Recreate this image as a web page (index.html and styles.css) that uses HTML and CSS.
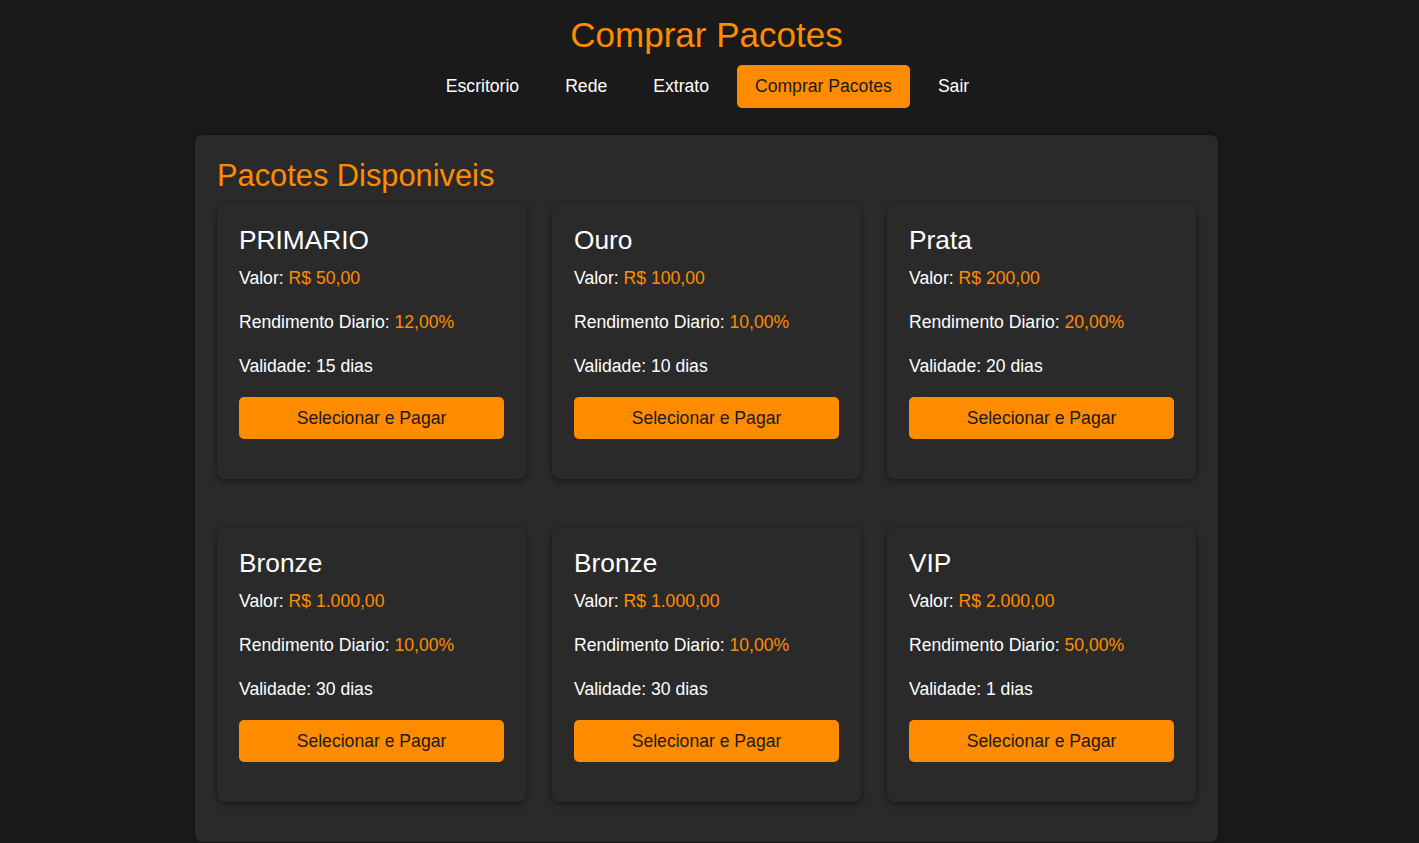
FILE: index.html
```html
<!DOCTYPE html>
<html lang="pt">
<head>
<meta charset="utf-8">
<title>Comprar Pacotes</title>
<link rel="stylesheet" href="styles.css">
</head>
<body>
<header class="header">
  <h1 class="page-title">Comprar Pacotes</h1>
  <nav class="nav">
    <a class="nav-link" href="#">Escritorio</a>
    <a class="nav-link" href="#">Rede</a>
    <a class="nav-link" href="#">Extrato</a>
    <a class="nav-link active" href="#">Comprar Pacotes</a>
    <a class="nav-link" href="#">Sair</a>
  </nav>
</header>
<main class="container">
  <h2 class="section-title">Pacotes Disponiveis</h2>
  <div class="grid">
    <div class="card">
      <h3 class="card-title">PRIMARIO</h3>
      <p class="line">Valor: <span class="hl">R$ 50,00</span></p>
      <p class="line">Rendimento Diario: <span class="hl">12,00%</span></p>
      <p class="line">Validade: 15 dias</p>
      <button class="btn">Selecionar e Pagar</button>
    </div>
    <div class="card">
      <h3 class="card-title">Ouro</h3>
      <p class="line">Valor: <span class="hl">R$ 100,00</span></p>
      <p class="line">Rendimento Diario: <span class="hl">10,00%</span></p>
      <p class="line">Validade: 10 dias</p>
      <button class="btn">Selecionar e Pagar</button>
    </div>
    <div class="card">
      <h3 class="card-title">Prata</h3>
      <p class="line">Valor: <span class="hl">R$ 200,00</span></p>
      <p class="line">Rendimento Diario: <span class="hl">20,00%</span></p>
      <p class="line">Validade: 20 dias</p>
      <button class="btn">Selecionar e Pagar</button>
    </div>
    <div class="card">
      <h3 class="card-title">Bronze</h3>
      <p class="line">Valor: <span class="hl">R$ 1.000,00</span></p>
      <p class="line">Rendimento Diario: <span class="hl">10,00%</span></p>
      <p class="line">Validade: 30 dias</p>
      <button class="btn">Selecionar e Pagar</button>
    </div>
    <div class="card">
      <h3 class="card-title">Bronze</h3>
      <p class="line">Valor: <span class="hl">R$ 1.000,00</span></p>
      <p class="line">Rendimento Diario: <span class="hl">10,00%</span></p>
      <p class="line">Validade: 30 dias</p>
      <button class="btn">Selecionar e Pagar</button>
    </div>
    <div class="card">
      <h3 class="card-title">VIP</h3>
      <p class="line">Valor: <span class="hl">R$ 2.000,00</span></p>
      <p class="line">Rendimento Diario: <span class="hl">50,00%</span></p>
      <p class="line">Validade: 1 dias</p>
      <button class="btn">Selecionar e Pagar</button>
    </div>
  </div>
</main>
</body>
</html>
```
FILE: styles.css
```css
html, body {
  margin: 0;
  padding: 0;
}
body {
  background: #1a1a1a;
  color: #ffffff;
  font-family: "Liberation Sans", Arial, sans-serif;
  height: 843px;
  overflow: hidden;
  margin-right: 6px;
}
.header {
  display: flex;
  flex-direction: column;
  align-items: center;
  padding-top: 14px;
}
.page-title {
  margin: 0;
  color: #ff8c00;
  font-size: 35px;
  font-weight: normal;
  line-height: 42px;
}
.nav {
  display: flex;
  gap: 10px;
  margin-top: 9px;
  margin-left: 2px;
}
.nav-link {
  color: #ffffff;
  text-decoration: none;
  font-size: 17.6px;
  line-height: 20px;
  padding: 11px 18px 12px;
  border-radius: 5px;
}
.nav-link.active {
  background: #ff8c00;
  color: #1a1a1a;
}
.container {
  width: 979px;
  margin: 27px auto 0;
  padding: 21px 22px 40px;
  background: #2a2a2a;
  border-radius: 8px;
  box-shadow: 0 0 6px rgba(0, 0, 0, 0.4);
}
.section-title {
  margin: 0 0 8px;
  color: #ff8c00;
  font-size: 30.8px;
  font-weight: normal;
  line-height: 40px;
}
.grid {
  display: grid;
  grid-template-columns: repeat(3, 309px);
  column-gap: 26px;
  row-gap: 48px;
}
.card {
  display: flex;
  flex-direction: column;
  gap: 24px;
  padding: 21px 22px 40px;
  background: #2a2a2a;
  border-radius: 8px;
  box-shadow: 0 2px 6px rgba(0, 0, 0, 0.45);
}
.card-title {
  margin: 0 0 -11px;
  font-size: 26.3px;
  font-weight: normal;
  line-height: 30px;
}
.line {
  margin: 0;
  font-size: 17.6px;
  line-height: 20px;
}
.hl {
  color: #ff8c00;
}
.btn {
  margin-top: -3px;
  height: 42px;
  border: none;
  border-radius: 5px;
  background: #ff8c00;
  color: #1a1a1a;
  font-family: "Liberation Sans", Arial, sans-serif;
  font-size: 17.6px;
  cursor: pointer;
}
```
